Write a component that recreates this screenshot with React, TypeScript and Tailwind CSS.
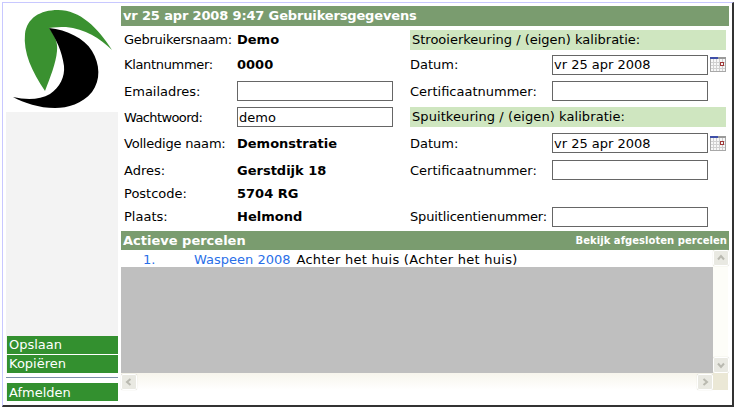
import type { ReactNode } from "react";

const Calendar = () => (
  <svg width="16" height="15" viewBox="0 0 16 15" className="shrink-0">
    <rect x="0" y="0" width="16" height="15" fill="#f7f7f7" />
    <path d="M0.5 2v13M3.5 2v13M6.5 2v13M9.5 2v13M12.5 2v13M15.5 2v13M0 5.5h16M0 8.5h16M0 11.5h16M0 14.5h16" stroke="#d0d0d0" strokeWidth="1" fill="none" />
    <path d="M0.5 0v15M15.5 0v15M0 14.5h16" stroke="#a8a8a8" strokeWidth="1" fill="none" />
    <rect x="0" y="0" width="8" height="2" fill="#3f4fa8" />
    <rect x="8" y="0" width="8" height="2" fill="#9a9a9a" />
    <rect x="10.5" y="5.5" width="3" height="3" fill="#f4f4f4" stroke="#a03a3a" strokeWidth="1" />
  </svg>
);

const Field = ({ value = "" }: { value?: string }) => (
  <input
    readOnly
    value={value}
    className="h-[20px] w-[156px] border border-[#666666] bg-white px-px text-[13px] text-black outline-none"
  />
);

const Bar = ({ children, className = "" }: { children: ReactNode; className?: string }) => (
  <div className={`col-span-2 flex h-[20px] w-[316px] items-center self-center whitespace-nowrap bg-[#cfe6c0] pl-[2px] ${className}`}>
    {children}
  </div>
);

// low = text rows that sit a pixel under the centre of the row
const Row = ({ children, low, className = "" }: { children?: ReactNode; low?: boolean; className?: string }) => (
  <div className={`flex items-center whitespace-nowrap ${low ? "pt-[2px]" : ""} ${className}`}>{children}</div>
);

const SideButton = ({ children, className = "" }: { children: ReactNode; className?: string }) => (
  <div className={`ml-px flex h-[18px] items-center bg-[#33902f] pl-[2px] text-white ${className}`}>{children}</div>
);

const ScrollButton = ({ d }: { d: string }) => (
  <div className="flex h-[16px] w-[16px] shrink-0 items-center justify-center rounded-[2px] border border-white bg-[#e9e9e2] shadow-[0_0_1px_#c8c8b8]">
    <svg width="10" height="10" viewBox="0 0 10 10">
      <path d={d} fill="none" stroke="#b9b9b0" strokeWidth="2" />
    </svg>
  </div>
);

export default function App() {
  return (
    <div className="h-[407px] w-[734px] overflow-hidden bg-white font-['DejaVu_Sans',sans-serif] text-[13px] text-black">
      <div className="ml-[2px] mt-[2px] flex h-[405px] w-[732px] border-b-2 border-l border-r-2 border-t border-b-[#333333] border-l-[#c8c8ff] border-r-[#333333] border-t-[#c8c8ff] pl-[3px] pt-[3px]">
        {/* sidebar */}
        <div className="flex w-[112px] shrink-0 flex-col bg-[#f3f3f3]">
          <div className="h-[106px] bg-white">
            <svg width="112" height="106" viewBox="6 6 112 106">
              <path d="M45 91C32 72 23 52 25 34C27 18 40 10 58 10C80 10 98 28 112 50C100 38 85 29 66 27C60 27 54 27 49 28C55 35 58 43 57 51C56 63 50 78 45 91Z" fill="#3a9130" />
              <path d="M49 28C67 30 84 38 92 51C100 64 101 80 92 92C82 104 68 108 55 108C39 108 24 103 13 97C26 100 40 100 50 94C60 87 65 77 64 66C62 51 56 39 49 28Z" fill="#000000" />
            </svg>
          </div>
          <div className="flex-1" />
          <SideButton>Opslaan</SideButton>
          <div className="h-px bg-white" />
          <SideButton>Kopiëren</SideButton>
          <div className="h-[4px] bg-white" />
          <div className="h-px bg-[#7b8fa8]" />
          <div className="h-[5px] bg-white" />
          <SideButton className="pt-[2px]">Afmelden</SideButton>
          <div className="h-[4px] bg-white" />
        </div>

        {/* main */}
        <div className="ml-[3px] flex w-[608px] flex-col">
          <div className="flex h-[20px] items-center whitespace-nowrap bg-[#7a9c6f] pl-[2px] font-bold tracking-[-0.15px] text-white">
            vr 25 apr 2008 9:47 Gebruikersgegevens
          </div>

          <div className="grid grid-cols-[113px_173px_142px_177px] grid-rows-[25px_25px_27px_26px_26px_27px_21px_25px] pl-[3px] pt-px">
            <Row className="tracking-[-0.27px]">Gebruikersnaam:</Row>
            <Row className="font-bold">Demo</Row>
            <Bar>Strooierkeuring / (eigen) kalibratie:</Bar>

            <Row className="tracking-[-0.33px]">Klantnummer:</Row>
            <Row className="font-bold">0000</Row>
            <Row>Datum:</Row>
            <Row>
              <Field value="vr 25 apr 2008" />
              <span className="ml-[2px]">
                <Calendar />
              </span>
            </Row>

            <Row low>Emailadres:</Row>
            <Row><Field /></Row>
            <Row low>Certificaatnummer:</Row>
            <Row><Field /></Row>

            <Row low className="tracking-[-0.6px]">Wachtwoord:</Row>
            <Row><Field value="demo" /></Row>
            <Bar className="tracking-[0.08px]">Spuitkeuring / (eigen) kalibratie:</Bar>

            <Row low className="tracking-[-0.2px]">Volledige naam:</Row>
            <Row low className="font-bold">Demonstratie</Row>
            <Row low>Datum:</Row>
            <Row>
              <Field value="vr 25 apr 2008" />
              <span className="ml-[2px]">
                <Calendar />
              </span>
            </Row>

            <Row low>Adres:</Row>
            <Row low className="font-bold">Gerstdijk 18</Row>
            <Row low>Certificaatnummer:</Row>
            <Row><Field /></Row>

            <Row>Postcode:</Row>
            <Row className="font-bold">5704 RG</Row>
            <Row />
            <Row />

            <Row>Plaats:</Row>
            <Row className="font-bold">Helmond</Row>
            <Row className="tracking-[-0.15px]">Spuitlicentienummer:</Row>
            <Row><Field /></Row>
          </div>

          <div className="mt-[2px] flex h-[19px] items-center justify-between whitespace-nowrap bg-[#7a9c6f] pl-[2px] font-bold text-white">
            <span>Actieve percelen</span>
            <span className="pr-[2px] text-[10px] tracking-[0.04px]">Bekijk afgesloten percelen</span>
          </div>

          <div className="flex h-[140px] w-[607px]">
            <div className="flex w-[592px] flex-col">
              <div className="flex-1 bg-[#bfbfbf]">
                <div className="flex h-[17px] items-center whitespace-nowrap bg-white pt-[2px]">
                  <span className="w-[73px] pl-[22px] text-[#2a6fe8]">1.</span>
                  <span className="text-[#2a6fe8]">Waspeen 2008</span>
                  <span className="ml-[6px] tracking-[0.27px]">Achter het huis (Achter het huis)</span>
                </div>
              </div>
              <div className="flex h-[17px] items-center justify-between bg-gradient-to-b from-[#f7f5ec] to-white">
                <ScrollButton d="M6.5 2L3 5l3.5 3" />
                <ScrollButton d="M3.5 2L7 5l-3.5 3" />
              </div>
            </div>
            <div className="flex w-[15px] flex-col">
              <div className="flex flex-1 flex-col justify-between bg-[#fdfdf8]">
                <ScrollButton d="M2 6.5L5 3l3 3.5" />
                <ScrollButton d="M2 3.5L5 7l3-3.5" />
              </div>
              <div className="h-[17px] bg-[#ebe8d6]" />
            </div>
          </div>
        </div>
      </div>
    </div>
  );
}
